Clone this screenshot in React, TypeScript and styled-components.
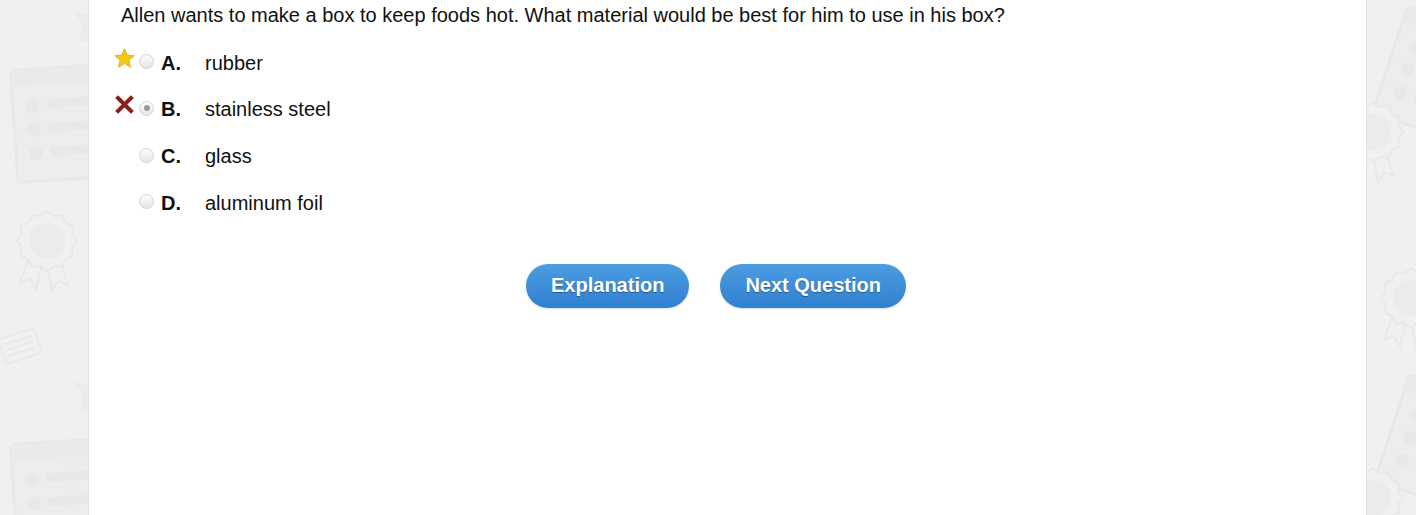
import React from 'react';
import styled, { createGlobalStyle } from 'styled-components';

const GlobalStyle = createGlobalStyle`
  html, body {
    margin: 0;
    padding: 0;
    background: #f0f0f0;
    font-family: "Liberation Sans", Arial, sans-serif;
    color: #111;
  }
`;

const Page = styled.div`
  position: relative;
  width: 1416px;
  height: 515px;
  overflow: hidden;
  background: #f0f0f0;
`;

// faint doodles behind the white sheet
const Backdrop = styled.div`
  position: absolute;
  inset: 0;
  pointer-events: none;
  opacity: 0.7;
`;

const Deco = styled.svg<{ $x: number; $y: number; $rot?: number }>`
  position: absolute;
  left: ${p => p.$x}px;
  top: ${p => p.$y}px;
  transform: rotate(${p => p.$rot ?? 0}deg);
`;

const Panel = styled.main`
  position: relative;
  margin-left: 88px;
  width: 1279px;
  height: 515px;
  box-sizing: border-box;
  background: #fff;
  border-left: 1px solid #e2e2e2;
  border-right: 1px solid #e2e2e2;
  padding: 3px 0 0 32px;
`;

const Question = styled.p`
  margin: 0;
  font-size: 20px;
  line-height: 24px;
`;

const Options = styled.ul`
  list-style: none;
  margin: 13px 0 0 -7px;
  padding: 0;
`;

const Option = styled.li`
  display: flex;
  align-items: center;
  height: 46.67px;
`;

const Mark = styled.span`
  width: 21px;
  height: 21px;
  margin-top: -10px;
  display: flex;
  align-items: center;
  justify-content: center;
`;

const Radio = styled.span<{ $checked?: boolean }>`
  position: relative;
  width: 15px;
  height: 15px;
  margin: -3px 0 0 4px;
  border-radius: 50%;
  box-sizing: border-box;
  border: 1px solid #d4d4d4;
  background: linear-gradient(#fcfcfc, #e6e6e6);
  &::after {
    content: '';
    display: ${p => (p.$checked ? 'block' : 'none')};
    position: absolute;
    left: 3.5px;
    top: 3.5px;
    width: 6px;
    height: 6px;
    border-radius: 50%;
    background: #9a9a9a;
  }
`;

const Letter = styled.span`
  width: 44px;
  margin-left: 7px;
  font-weight: bold;
  font-size: 20px;
`;

const Answer = styled.span`
  font-size: 20px;
`;

const Actions = styled.div`
  display: flex;
  justify-content: center;
  gap: 31px;
  margin-top: 37px;
  padding-right: 55px;
`;

const Button = styled.button`
  height: 44px;
  padding: 0 25px;
  border: none;
  border-radius: 22px;
  background: linear-gradient(#4d9de2, #2f7fd0);
  color: #fff;
  font-family: "Liberation Sans", Arial, sans-serif;
  font-weight: bold;
  font-size: 20px;
  text-shadow: 0 1px 1px rgba(0, 0, 0, 0.35);
  box-shadow: 0 1px 2px rgba(0, 0, 0, 0.15);
  cursor: pointer;
`;

const Star = () => (
  <svg width="21" height="21" viewBox="0 0 20 20">
    <path
      d="M10 0.8 L12.7 6.9 L19.2 7.4 L14.2 11.7 L15.8 18.4 L10 14.8 L4.2 18.4 L5.8 11.7 L0.8 7.4 L7.3 6.9 Z"
      fill="#f6c614"
      stroke="#e4a90a"
      strokeWidth="0.8"
      strokeLinejoin="round"
    />
  </svg>
);

const Cross = () => (
  <svg width="21" height="21" viewBox="0 0 20 20">
    <path d="M2.5 2.5 L17.5 17.5 M17.5 2.5 L2.5 17.5" stroke="#8c1d1d" strokeWidth="4" strokeLinecap="butt" />
  </svg>
);

const Card = ({ x, y, rot }: { x: number; y: number; rot: number }) => (
  <Deco $x={x} $y={y} $rot={rot} width="82" height="116" viewBox="0 0 82 116">
    <rect x="2" y="2" width="78" height="112" rx="4" fill="#ededed" stroke="#e6e6e6" strokeWidth="3" />
    <rect x="2" y="2" width="78" height="16" fill="#e8e8e8" />
    <circle cx="22" cy="38" r="7" fill="#e6e6e6" />
    <circle cx="22" cy="62" r="7" fill="#e6e6e6" />
    <circle cx="22" cy="86" r="7" fill="#e6e6e6" />
    <rect x="36" y="33" width="44" height="9" rx="2" fill="#e6e6e6" />
    <rect x="36" y="57" width="44" height="9" rx="2" fill="#e6e6e6" />
    <rect x="36" y="81" width="44" height="9" rx="2" fill="#e6e6e6" />
  </Deco>
);

const gearPath = (cx: number, cy: number, r: number, bumps: number) => {
  let d = '';
  for (let i = 0; i <= bumps * 2; i++) {
    const a = (Math.PI * i) / bumps;
    const rr = i % 2 === 0 ? r : r - 4;
    d += `${i === 0 ? 'M' : 'L'}${(cx + rr * Math.cos(a)).toFixed(1)} ${(cy + rr * Math.sin(a)).toFixed(1)} `;
  }
  return d + 'Z';
};

const Medal = ({ x, y }: { x: number; y: number }) => (
  <Deco $x={x} $y={y} width="70" height="92" viewBox="0 0 70 92">
    <path d="M18 50 L8 78 L18 74 L24 84 L30 60 Z" fill="none" stroke="#e6e6e6" strokeWidth="2" />
    <path d="M46 52 L56 80 L46 76 L40 86 L36 62 Z" fill="none" stroke="#e6e6e6" strokeWidth="2" />
    <path d={gearPath(35, 36, 30, 12)} fill="#f0f0f0" stroke="#e6e6e6" strokeWidth="2" strokeLinejoin="round" />
    <circle cx="35" cy="36" r="18" fill="#e9e9e9" />
  </Deco>
);

const Note = ({ x, y, rot }: { x: number; y: number; rot: number }) => (
  <Deco $x={x} $y={y} $rot={rot} width="40" height="28" viewBox="0 0 40 28">
    <rect x="1" y="1" width="38" height="26" rx="2" fill="none" stroke="#e6e6e6" strokeWidth="2" />
    <path d="M6 8 H34 M6 14 H34 M6 20 H34" stroke="#e6e6e6" strokeWidth="2" />
  </Deco>
);

const Bow = ({ x, y }: { x: number; y: number }) => (
  <Deco $x={x} $y={y} width="24" height="34" viewBox="0 0 24 34">
    <path d="M2 2 L22 6 L22 30 L6 32 L12 16 Z" fill="#e9e9e9" />
  </Deco>
);

const options = [
  { letter: 'A.', text: 'rubber', mark: 'star' },
  { letter: 'B.', text: 'stainless steel', mark: 'cross', checked: true },
  { letter: 'C.', text: 'glass' },
  { letter: 'D.', text: 'aluminum foil' },
];

export default function App() {
  return (
    <Page>
      <GlobalStyle />
      <Backdrop>
        <Bow x={72} y={10} />
        <Card x={12} y={66} rot={-4} />
        <Medal x={12} y={205} />
        <Note x={0} y={332} rot={-18} />
        <Bow x={72} y={380} />
        <Card x={12} y={440} rot={-4} />
        <Card x={1386} y={14} rot={18} />
        <Medal x={1338} y={96} />
        <Medal x={1376} y={262} />
        <Card x={1388} y={382} rot={18} />
        <Medal x={1338} y={462} />
      </Backdrop>
      <Panel>
        <Question>
          Allen wants to make a box to keep foods hot. What material would be best for him to use in his box?
        </Question>
        <Options>
          {options.map(o => (
            <Option key={o.letter}>
              <Mark>
                {o.mark === 'star' && <Star />}
                {o.mark === 'cross' && <Cross />}
              </Mark>
              <Radio $checked={o.checked} />
              <Letter>{o.letter}</Letter>
              <Answer>{o.text}</Answer>
            </Option>
          ))}
        </Options>
        <Actions>
          <Button>Explanation</Button>
          <Button>Next Question</Button>
        </Actions>
      </Panel>
    </Page>
  );
}
